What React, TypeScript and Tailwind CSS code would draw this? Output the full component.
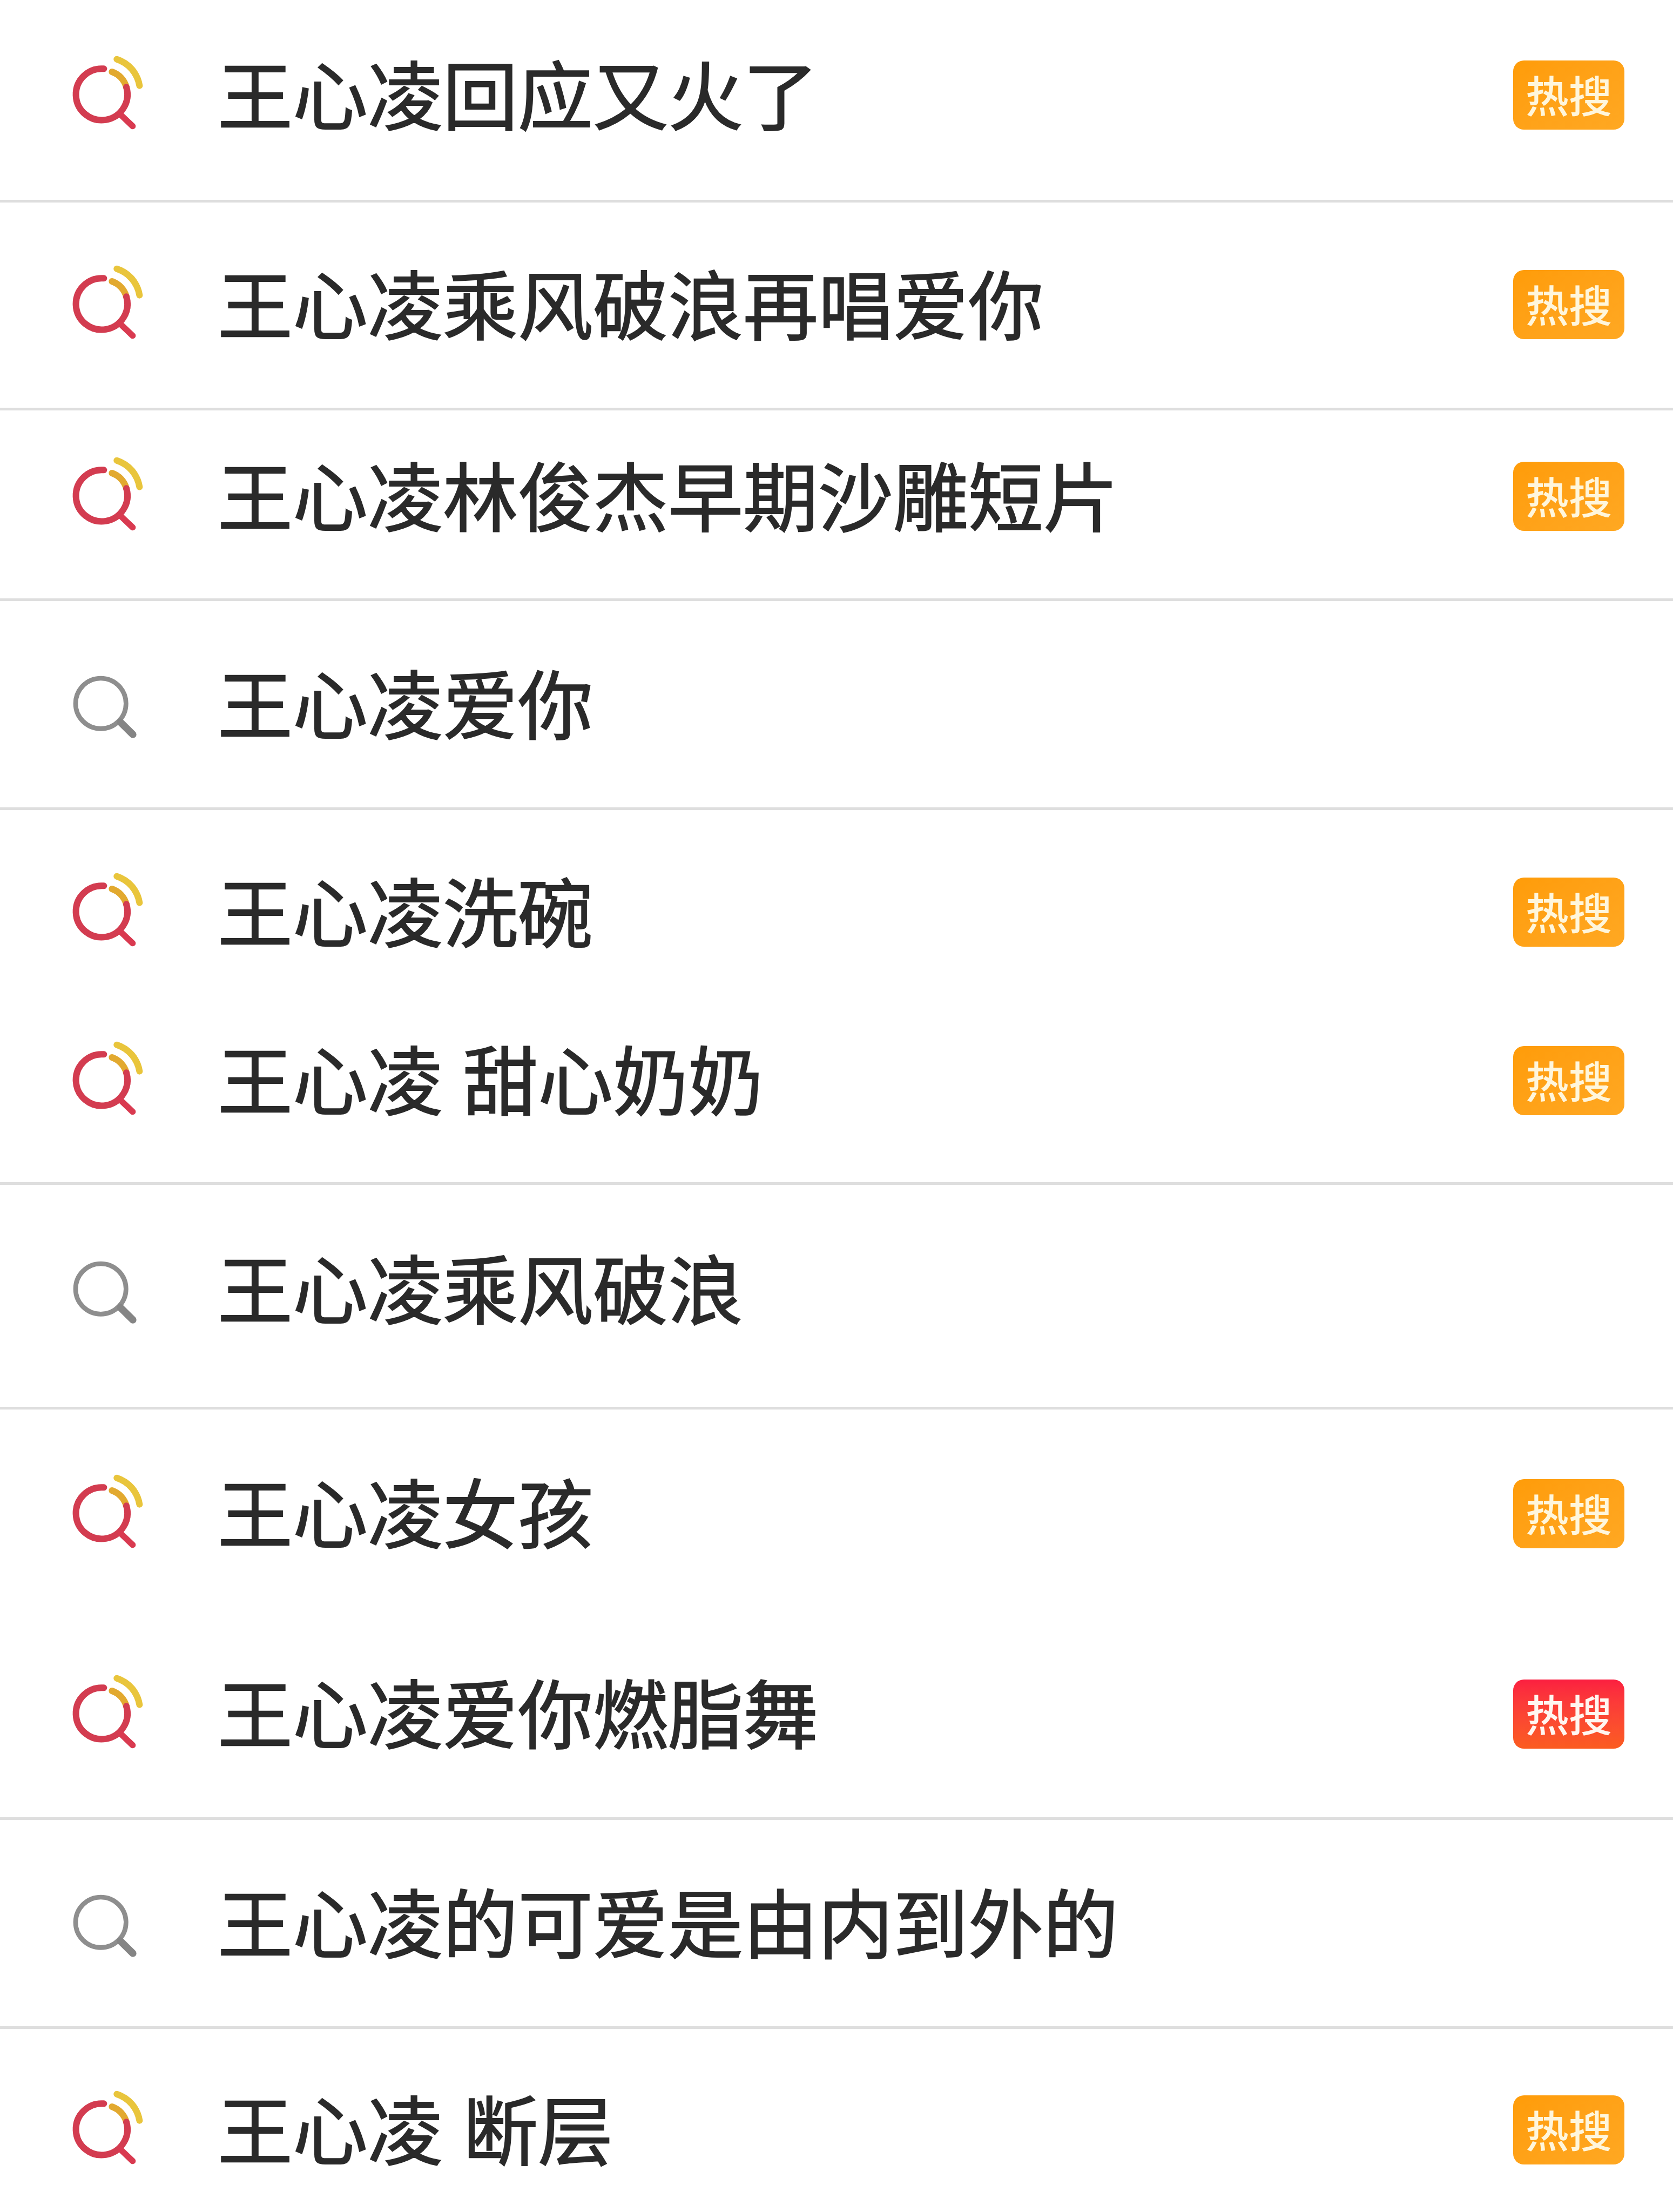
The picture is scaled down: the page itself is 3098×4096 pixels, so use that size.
const font = { fontFamily: '"Noto Sans CJK SC", sans-serif' };

function HotIcon() {
  return (
    <svg viewBox="0 0 600 600" className="w-[200px] h-[200px] shrink-0" fill="none" strokeLinecap="round">
      <g transform="translate(-3 6)">
        <path d="M325 165 A 125 125 0 0 1 405 250" stroke="#e2a92f" strokeWidth="36" />
        <path d="M352 95 A 185 185 0 0 1 478 242" stroke="#e9c53c" strokeWidth="36" />
        <path d="M280 148 A 143 143 0 1 0 405 250" stroke="#d33c50" strokeWidth="36" />
        <path d="M375 405 L440 467" stroke="#d93a50" strokeWidth="34" />
      </g>
    </svg>
  );
}

function PlainIcon() {
  return (
    <svg viewBox="0 0 600 600" className="w-[200px] h-[200px] shrink-0" fill="none" strokeLinecap="round">
      <circle cx="260" cy="296" r="140" stroke="#8e8e8e" strokeWidth="26" />
      <path d="M368 399 L438 468" stroke="#858585" strokeWidth="40" />
    </svg>
  );
}

function Badge({ red }: { red?: boolean }) {
  return (
    <div
      className={
        red
          ? "ml-auto w-[206px] h-[128px] rounded-[20px] flex items-center justify-center text-[80px] font-medium leading-none text-[#fff6f0] bg-gradient-to-b from-[#fb1f40] to-[#fb5c20]"
          : "ml-auto w-[206px] h-[128px] rounded-[20px] flex items-center justify-center text-[80px] font-medium leading-none text-[#fff6dc] bg-gradient-to-br from-[#ff9c08] to-[#ffa822]"
      }
    >
      <span className="mb-[6px]">热搜</span>
    </div>
  );
}

const rows = [
  { text: "王心凌回应又火了", badge: "o", cls: "h-[375px] pb-[18px] border-b-[5px] border-[#dedede]" },
  { text: "王心凌乘风破浪再唱爱你", badge: "o", cls: "h-[385px] pb-[2px] border-b-[5px] border-[#dedede]" },
  { text: "王心凌林俊杰早期沙雕短片", badge: "o", cls: "h-[353px] pb-[30px] border-b-[5px] border-[#dedede]" },
  { text: "王心凌爱你", badge: "", cls: "h-[387px] pb-[0px] border-b-[5px] border-[#dedede]" },
  { text: "王心凌洗碗", badge: "o", cls: "h-[347px] pt-[31px]" },
  { text: "王心凌 甜心奶奶", badge: "o", cls: "h-[347px] pb-[35px] border-b-[5px] border-[#dedede]" },
  { text: "王心凌乘风破浪", badge: "", cls: "h-[416px] pb-[24px] border-b-[5px] border-[#dedede]" },
  { text: "王心凌女孩", badge: "o", cls: "h-[392px] pb-[7px]" },
  { text: "王心凌爱你燃脂舞", badge: "r", cls: "h-[368px] pb-[20px] border-b-[5px] border-[#dedede]" },
  { text: "王心凌的可爱是由内到外的", badge: "", cls: "h-[387px] pb-[0px] border-b-[5px] border-[#dedede]" },
  { text: "王心凌 断层", badge: "o", cls: "h-[342px] pt-[32px]" },
];

export default function App() {
  return (
    <div className="w-[3098px] h-[4096px] bg-white overflow-hidden flex flex-col" style={font}>
      {rows.map((r) => (
        <div key={r.text} className={"flex items-center pl-[100px] pr-[90px] shrink-0 box-border " + r.cls}>
          {r.badge ? <HotIcon /> : <PlainIcon />}
          <span className="ml-[103px] mb-[14px] text-[139px] [-webkit-text-stroke:2px_#2a2a2a] [word-spacing:6px] leading-none text-[#2a2a2a] whitespace-pre">{r.text}</span>
          {r.badge === "o" && <Badge />}
          {r.badge === "r" && <Badge red />}
        </div>
      ))}
    </div>
  );
}
